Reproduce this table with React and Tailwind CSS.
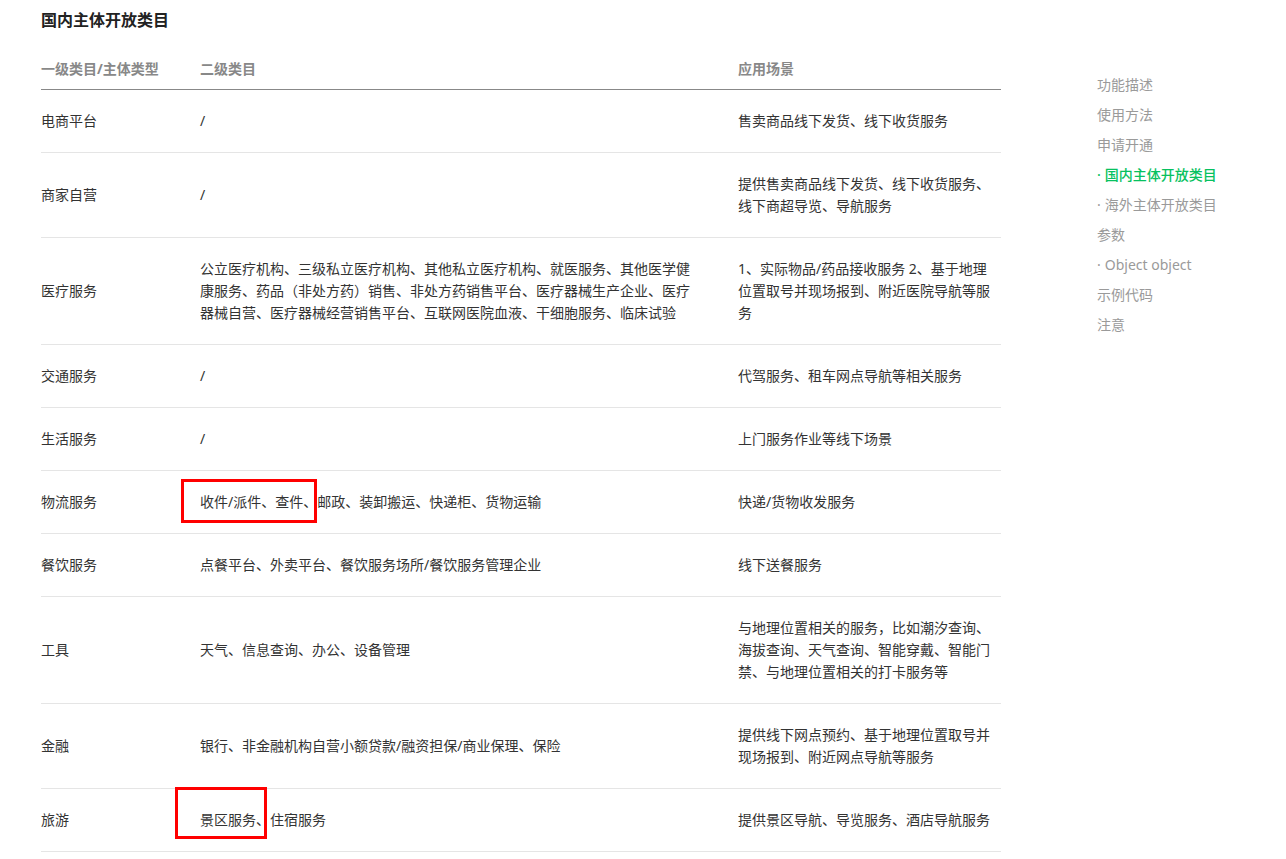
import React from "react";

const rows = [
  { a: "电商平台", b: ["/"], c: ["售卖商品线下发货、线下收货服务"] },
  { a: "商家自营", b: ["/"], c: ["提供售卖商品线下发货、线下收货服务、", "线下商超导览、导航服务"] },
  {
    a: "医疗服务",
    b: [
      "公立医疗机构、三级私立医疗机构、其他私立医疗机构、就医服务、其他医学健",
      "康服务、药品（非处方药）销售、非处方药销售平台、医疗器械生产企业、医疗",
      "器械自营、医疗器械经营销售平台、互联网医院血液、干细胞服务、临床试验",
    ],
    c: ["1、实际物品/药品接收服务 2、基于地理", "位置取号并现场报到、附近医院导航等服", "务"],
  },
  { a: "交通服务", b: ["/"], c: ["代驾服务、租车网点导航等相关服务"] },
  { a: "生活服务", b: ["/"], c: ["上门服务作业等线下场景"] },
  { a: "物流服务", b: ["收件/派件、查件、邮政、装卸搬运、快递柜、货物运输"], c: ["快递/货物收发服务"] },
  { a: "餐饮服务", b: ["点餐平台、外卖平台、餐饮服务场所/餐饮服务管理企业"], c: ["线下送餐服务"] },
  {
    a: "工具",
    b: ["天气、信息查询、办公、设备管理"],
    c: ["与地理位置相关的服务，比如潮汐查询、", "海拔查询、天气查询、智能穿戴、智能门", "禁、与地理位置相关的打卡服务等"],
  },
  {
    a: "金融",
    b: ["银行、非金融机构自营小额贷款/融资担保/商业保理、保险"],
    c: ["提供线下网点预约、基于地理位置取号并", "现场报到、附近网点导航等服务"],
  },
  { a: "旅游", b: ["景区服务、住宿服务"], c: ["提供景区导航、导览服务、酒店导航服务"] },
];

const nav = [
  { t: "功能描述" },
  { t: "使用方法" },
  { t: "申请开通" },
  { t: "国内主体开放类目", sub: true, active: true },
  { t: "海外主体开放类目", sub: true },
  { t: "参数" },
  { t: "Object object", sub: true },
  { t: "示例代码" },
  { t: "注意" },
];

const font = { fontFamily: '"Noto Sans", "Noto Sans CJK SC", sans-serif' };

export default function App() {
  return (
    <div className="relative w-[1286px] min-h-[859px] bg-white text-[14px] text-[#333]" style={font}>
      <div className="flex">
        <div className="ml-[41px] w-[960px] pt-[8px]">
          <h2 className="text-[16px] leading-[24px] font-bold text-[#222]">国内主体开放类目</h2>
          <div className="mt-[26px] grid grid-cols-[159px_538px_263px] border-b border-[#888] pb-[9px] leading-[22px] font-bold text-[#888]">
            <div>一级类目/主体类型</div>
            <div>二级类目</div>
            <div>应用场景</div>
          </div>
          {rows.map((r, i) => (
            <div
              key={i}
              className="grid grid-cols-[159px_538px_263px] items-center border-b border-[#e5e5e5] py-[20px] leading-[22px]"
            >
              <div>{r.a}</div>
              <div className="pr-[40px]">
                {r.b.map((l, j) => (
                  <div key={j} className="whitespace-nowrap">{l}</div>
                ))}
              </div>
              <div>
                {r.c.map((l, j) => (
                  <div key={j} className="whitespace-nowrap">{l}</div>
                ))}
              </div>
            </div>
          ))}
        </div>
        <div className="ml-[96px] pt-[70px]">
          {nav.map((n, i) => (
            <div
              key={i}
              className={
                n.active
                  ? "leading-[30px] text-[14px] text-[#07c160] font-medium"
                  : "leading-[30px] text-[14px] text-[#9a9a9a]"
              }
            >
              {n.sub ? <span className="mr-[4px]">·</span> : null}
              {n.t}
            </div>
          ))}
        </div>
      </div>
      <div className="absolute left-[181px] top-[479px] h-[44px] w-[136px] border-[3px] border-[#ff0000]" />
      <div className="absolute left-[175px] top-[787px] h-[52px] w-[92px] border-[3px] border-[#ff0000]" />
    </div>
  );
}
